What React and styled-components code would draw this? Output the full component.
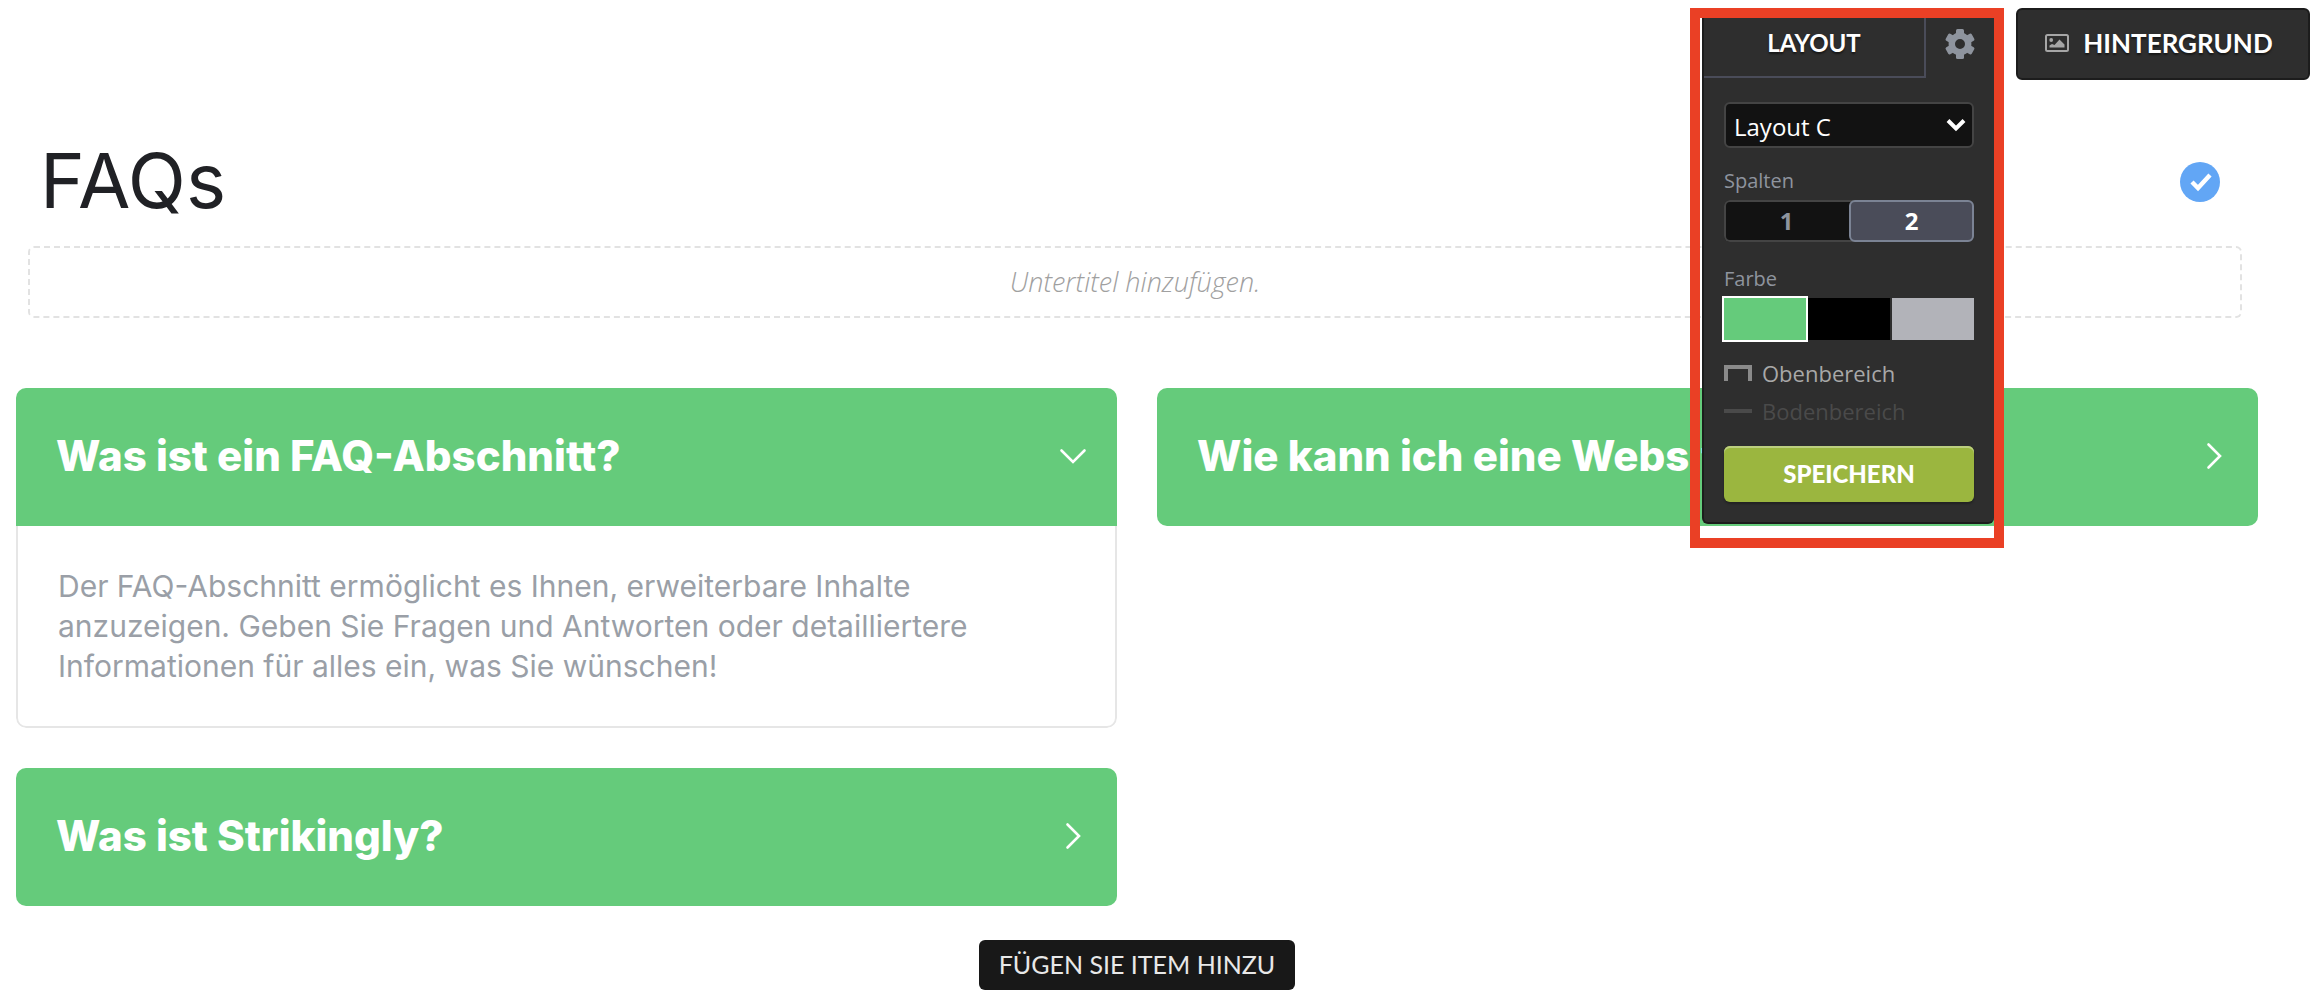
import React, { useState } from 'react';
import styled, { createGlobalStyle } from 'styled-components';

const GlobalStyle = createGlobalStyle`
  *, *::before, *::after {
    box-sizing: border-box;
  }
  body {
    margin: 0;
    background: #fff;
    font-family: 'Open Sans', 'Noto Sans', sans-serif;
  }
  h1, h2, p {
    margin: 0;
  }
  button, select {
    font: inherit;
    cursor: pointer;
  }
`;

const Page = styled.main`
  position: relative;
  padding: 140px 58px 16px 16px;
`;

const SectionHeader = styled.header`
  display: flex;
  align-items: center;
  justify-content: space-between;
  padding: 0 38px 0 24px;
`;

const Title = styled.h1`
  padding-bottom: 4px;
  font-family: Inter, sans-serif;
  font-size: 76px;
  line-height: 80px;
  font-weight: 400;
  color: #202125;
`;

const DoneButton = styled.button`
  display: flex;
  align-items: center;
  justify-content: center;
  width: 40px;
  height: 40px;
  padding: 0;
  border: 0;
  border-radius: 50%;
  background: #62a6f5;
`;

const Subtitle = styled.p`
  margin: 22px 16px 0 12px;
  padding: 14px;
  border: 2px dashed #e2e2e2;
  border-radius: 6px;
  font-size: 27px;
  line-height: 40px;
  font-style: italic;
  font-weight: 300;
  text-align: center;
  color: #a0a0a0;
`;

const FaqGrid = styled.section`
  display: grid;
  grid-template-columns: 1fr 1fr;
  align-items: start;
  gap: 40px;
  margin-top: 70px;
`;

const Card = styled.article`
  border-radius: 10px;
  overflow: hidden;
`;

const Question = styled.button`
  display: flex;
  align-items: center;
  justify-content: space-between;
  width: 100%;
  height: 138px;
  padding: 0 30px 2px 40px;
  border: 0;
  background: #65cb7b;
  color: #fff;
  font-family: Inter, sans-serif;
  font-size: 42px;
  line-height: 48px;
  font-weight: 800;
  text-align: left;
  white-space: nowrap;
`;

const Answer = styled.p`
  padding: 40px;
  border: 2px solid #e6e6e6;
  border-top: 0;
  border-radius: 0 0 10px 10px;
  font-family: Inter, sans-serif;
  font-size: 30px;
  line-height: 40px;
  color: #9a9fa7;
`;

const AddButton = styled.button`
  display: block;
  height: 50px;
  margin: 34px auto 0;
  padding: 0 20px 2px;
  border: 0;
  border-radius: 6px;
  background: #181818;
  color: #e8e8e8;
  font-family: Lato, sans-serif;
  font-size: 25px;
  line-height: 32px;
`;

const Toolbar = styled.aside`
  position: absolute;
  top: 8px;
  right: 6px;
  display: flex;
  align-items: flex-start;
  gap: 12px;
`;

const Highlight = styled.div`
  width: 314px;
  padding: 0 0 14px 2px;
  border: 10px solid #ea4025;
`;

const Panel = styled.div`
  border: solid #1c1c1c;
  border-width: 0 0 2px 2px;
  border-radius: 0 0 6px 6px;
  background: #2e2e2e;
`;

const Tabs = styled.div`
  display: flex;
  height: 60px;
`;

const Tab = styled.button`
  width: 222px;
  padding: 0 0 10px;
  border: solid #4a4c59;
  border-width: 0 2px 2px 0;
  background: none;
  color: #fff;
  font-family: Lato, sans-serif;
  font-size: 24px;
  font-weight: 700;
  text-shadow: 0 2px 2px rgba(0, 0, 0, 0.5);
`;

const SettingsTab = styled.button`
  display: flex;
  flex: 1;
  align-items: center;
  justify-content: center;
  padding: 0 0 8px;
  border: 0;
  background: none;
  color: #8e949e;
`;

const PanelBody = styled.div`
  display: flex;
  flex-direction: column;
  padding: 24px 20px 20px;
`;

const SelectBox = styled.div`
  display: grid;
  align-items: center;
  & > * {
    grid-area: 1 / 1;
  }
  & > svg {
    justify-self: end;
    margin-right: 8px;
    pointer-events: none;
  }
`;

const LayoutSelect = styled.select`
  width: 100%;
  height: 46px;
  padding: 2px 8px 0;
  border: 2px solid #444;
  border-radius: 6px;
  appearance: none;
  background: #121212;
  color: #fff;
  font-size: 24px;
`;

const Label = styled.span`
  margin-top: ${props => props.$top};
  font-size: 20px;
  line-height: 26px;
  color: #8e949e;
`;

const Segments = styled.div`
  display: grid;
  grid-template-columns: 1fr 1fr;
  height: 42px;
  margin-top: 6px;
  border-radius: 6px;
  background: #121212;
  box-shadow: inset 0 0 0 2px #444;
`;

const Segment = styled.button`
  padding: 0;
  border: 2px solid ${props => props.$active ? '#7b8394' : 'transparent'};
  border-radius: 6px;
  background: ${props => props.$active ? '#4a4c59' : 'none'};
  color: ${props => props.$active ? '#fff' : '#8e949e'};
  font-size: 24px;
  line-height: 32px;
  font-weight: 700;
`;

const Swatches = styled.div`
  display: grid;
  grid-template-columns: repeat(3, 1fr);
  gap: 2px;
  margin-top: 6px;
`;

const Swatch = styled.button`
  height: 42px;
  padding: 0;
  border: 0;
  background: ${props => props.$color};
  outline: ${props => props.$active ? '2px solid #fff' : 'none'};
`;

const Options = styled.div`
  display: flex;
  flex-direction: column;
  gap: 6px;
  margin-top: 18px;
`;

const Option = styled.button`
  display: flex;
  align-items: center;
  gap: 10px;
  padding: 0 0 2px;
  border: 0;
  background: none;
  color: ${props => props.disabled ? '#4a4a4a' : '#a8a8a8'};
  font-size: 22px;
  line-height: 30px;
  & svg {
    color: ${props => props.disabled ? '#4a4a4a' : '#8a8a8a'};
  }
`;

const SaveButton = styled.button`
  height: 56px;
  margin-top: 18px;
  padding: 0 0 2px;
  border: 0;
  border-radius: 6px;
  background: #9bb63f;
  box-shadow: inset 0 2px 0 #bccf7f, 0 2px 2px rgba(0, 0, 0, 0.25);
  color: #fff;
  font-family: Lato, sans-serif;
  font-size: 24px;
  font-weight: 900;
`;

const BackgroundButton = styled.button`
  display: flex;
  align-items: center;
  justify-content: center;
  gap: 14px;
  width: 294px;
  height: 72px;
  padding: 0 8px 2px 0;
  border: 2px solid #1c1c1c;
  border-radius: 6px;
  background: #2e2e2e;
  color: #fff;
  font-family: Lato, sans-serif;
  font-size: 26px;
  font-weight: 700;
  text-shadow: 0 2px 2px rgba(0, 0, 0, 0.5);
`;

const Chevron = ({ open }) => (
  <svg width="28" height="28" viewBox="0 0 28 28" fill="none" stroke="#fff" strokeWidth="2.6" strokeLinecap="round">
    <path d={open ? 'M2.5 8.5 14 20 25.5 8.5' : 'M8.5 2.5 20 14 8.5 25.5'} />
  </svg>
);

const CheckIcon = () => (
  <svg width="40" height="40" viewBox="0 0 40 40" fill="none" stroke="#fff" strokeWidth="4.4">
    <path d="m12 20 6 6 12-13" />
  </svg>
);

const GearIcon = () => (
  <svg width="30" height="30" viewBox="-15 -15 30 30" fill="currentColor">
    <circle r="8.2" fill="none" stroke="currentColor" strokeWidth="6.400" />
    {[0, 60, 120, 180, 240, 300].map(angle => (
      <rect key={angle} x="-4" y="-15" width="8" height="7" rx="1.500" transform={`rotate(${angle})`} />
    ))}
  </svg>
);

const SelectArrow = () => (
  <svg width="20" height="14" viewBox="0 0 20 14" fill="none" stroke="#fff" strokeWidth="4">
    <path d="m2 2.5 8 8 8-8" />
  </svg>
);

const PictureIcon = () => (
  <svg width="24" height="18" viewBox="0 0 24 18" fill="#a6a6a6">
    <rect x="1" y="1" width="22" height="16" rx="1.5" fill="none" stroke="#a6a6a6" strokeWidth="2" />
    <circle cx="6.2" cy="6" r="1.9" />
    <path d="M4.5 13.5v-2L7 10l2.5 1 5-5.500 5 5v3z" />
  </svg>
);

const TopAreaIcon = () => (
  <svg width="28" height="16" viewBox="0 0 28 16" fill="none" stroke="currentColor" strokeWidth="4">
    <path d="M2 16V2h24v14" />
  </svg>
);

const BottomAreaIcon = () => (
  <svg width="28" height="4" viewBox="0 0 28 4" fill="currentColor">
    <path d="M0 0h28v4H0z" />
  </svg>
);

const faqs = [
  {
    question: 'Was ist ein FAQ-Abschnitt?',
    answer: 'Der FAQ-Abschnitt ermöglicht es Ihnen, erweiterbare Inhalte anzuzeigen. Geben Sie Fragen und Antworten oder detailliertere Informationen für alles ein, was Sie wünschen!'
  },
  { question: 'Wie kann ich eine Website?' },
  { question: 'Was ist Strikingly?' }
];

const colors = [
  { name: 'Grün', value: '#65cb7b' },
  { name: 'Schwarz', value: '#000' },
  { name: 'Grau', value: '#b2b3b9' }
];

const LayoutPanel = () => {
  const [layout, setLayout] = useState('C');
  const [columns, setColumns] = useState(2);
  const [color, setColor] = useState('#65cb7b');

  return (
    <Panel>
      <Tabs>
        <Tab>LAYOUT</Tab>
        <SettingsTab aria-label="Einstellungen"><GearIcon /></SettingsTab>
      </Tabs>
      <PanelBody>
        <SelectBox>
          <LayoutSelect aria-label="Layout" value={layout} onChange={e => setLayout(e.target.value)}>
            <option value="A">Layout A</option>
            <option value="B">Layout B</option>
            <option value="C">Layout C</option>
          </LayoutSelect>
          <SelectArrow />
        </SelectBox>
        <Label id="columns" $top="20px">Spalten</Label>
        <Segments role="group" aria-labelledby="columns">
          {[1, 2].map(count => <Segment
            key={count}
            $active={columns === count}
            aria-pressed={columns === count}
            onClick={() => setColumns(count)}
          >{count}</Segment>)}
        </Segments>
        <Label id="color" $top="24px">Farbe</Label>
        <Swatches role="group" aria-labelledby="color">
          {colors.map(({ name, value }) => <Swatch
            key={value}
            $color={value}
            $active={color === value}
            aria-label={name}
            onClick={() => setColor(value)}
          />)}
        </Swatches>
        <Options>
          <Option><TopAreaIcon />Obenbereich</Option>
          <Option disabled><BottomAreaIcon />Bodenbereich</Option>
        </Options>
        <SaveButton>SPEICHERN</SaveButton>
      </PanelBody>
    </Panel>
  );
};

const App = () => {
  const [openIndex, setOpenIndex] = useState(0);

  return (
    <>
      <GlobalStyle />
      <Page>
        <SectionHeader>
          <Title>FAQs</Title>
          <DoneButton aria-label="Fertig"><CheckIcon /></DoneButton>
        </SectionHeader>
        <Subtitle>Untertitel hinzufügen.</Subtitle>
        <FaqGrid>
          {faqs.map(({ question, answer }, index) => {
            const open = index === openIndex;
            return (
              <Card key={question}>
                <Question aria-expanded={open} onClick={() => setOpenIndex(open ? -1 : index)}>
                  {question}
                  <Chevron open={open} />
                </Question>
                {open && answer && <Answer>{answer}</Answer>}
              </Card>
            );
          })}
        </FaqGrid>
        <AddButton>FÜGEN SIE ITEM HINZU</AddButton>
        <Toolbar>
          <Highlight>
            <LayoutPanel />
          </Highlight>
          <BackgroundButton><PictureIcon />HINTERGRUND</BackgroundButton>
        </Toolbar>
      </Page>
    </>
  );
};

export default App;
